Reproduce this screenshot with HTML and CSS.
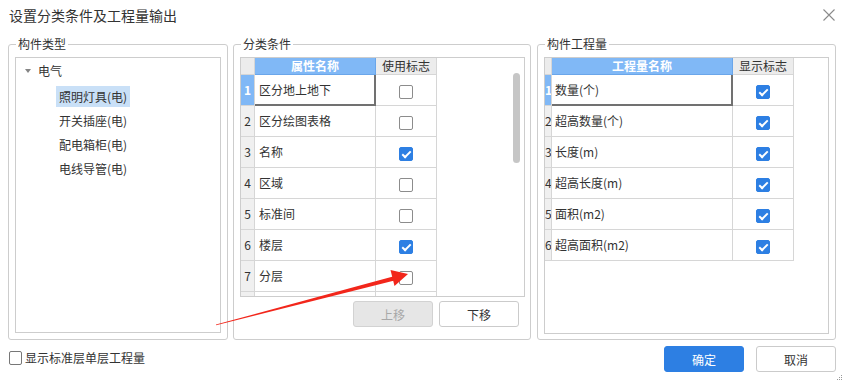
FILE: index.html
```html
<!DOCTYPE html>
<html lang="zh-CN">
    <head>
        <meta charset="UTF-8" />
        <title>设置分类条件及工程量输出</title>
        <link rel="stylesheet" href="styles.css">
    </head>
    <body>
        <div class="dialog">
            <div class="titlebar">
                <span class="title">设置分类条件及工程量输出</span>
                <svg class="close" width="12" height="12" viewBox="0 0 12 12">
                    <path d="M0.5 0.5 L11.5 11.5 M11.5 0.5 L0.5 11.5" stroke="#8a8a8a" stroke-width="1.1" fill="none" />
                </svg>
            </div>

            <div class="main">
                <fieldset class="group group-type">
                    <legend>构件类型</legend>
                    <div class="tree">
                        <div class="tree-node"><i class="caret"></i>电气</div>
                        <div class="tree-leaf"><span class="selected">照明灯具(电)</span></div>
                        <div class="tree-leaf"><span>开关插座(电)</span></div>
                        <div class="tree-leaf"><span>配电箱柜(电)</span></div>
                        <div class="tree-leaf"><span>电线导管(电)</span></div>
                    </div>
                </fieldset>

                <fieldset class="group group-cond">
                    <legend>分类条件</legend>
                    <div class="grid">
                        <table class="sheet sheet-cond">
                            <colgroup><col class="c-idx"><col class="c-name"><col class="c-flag"></colgroup>
                            <thead>
                                <tr><th class="idx"></th><th class="hl">属性名称</th><th>使用标志</th></tr>
                            </thead>
                            <tbody>
                                <tr><td class="idx cur">1</td><td class="name focus">区分地上地下</td><td class="flag"><span class="cb"></span></td></tr>
                                <tr><td class="idx">2</td><td class="name">区分绘图表格</td><td class="flag"><span class="cb"></span></td></tr>
                                <tr><td class="idx">3</td><td class="name">名称</td><td class="flag"><span class="cb on"></span></td></tr>
                                <tr><td class="idx">4</td><td class="name">区域</td><td class="flag"><span class="cb"></span></td></tr>
                                <tr><td class="idx">5</td><td class="name">标准间</td><td class="flag"><span class="cb"></span></td></tr>
                                <tr><td class="idx">6</td><td class="name">楼层</td><td class="flag"><span class="cb on"></span></td></tr>
                                <tr><td class="idx">7</td><td class="name">分层</td><td class="flag"><span class="cb"></span></td></tr>
                                <tr><td class="idx"></td><td class="name"></td><td class="flag"></td></tr>
                            </tbody>
                        </table>
                        <div class="scrollbar"></div>
                    </div>
                    <div class="move-btns">
                        <button class="btn" disabled>上移</button>
                        <button class="btn">下移</button>
                    </div>
                </fieldset>

                <fieldset class="group group-qty">
                    <legend>构件工程量</legend>
                    <div class="grid grid-tall">
                        <table class="sheet sheet-qty">
                            <colgroup><col class="c-idx"><col class="c-name"><col class="c-flag"></colgroup>
                            <thead>
                                <tr><th class="idx"></th><th class="hl">工程量名称</th><th>显示标志</th></tr>
                            </thead>
                            <tbody>
                                <tr><td class="idx cur">1</td><td class="name focus">数量(个)</td><td class="flag"><span class="cb on"></span></td></tr>
                                <tr><td class="idx">2</td><td class="name">超高数量(个)</td><td class="flag"><span class="cb on"></span></td></tr>
                                <tr><td class="idx">3</td><td class="name">长度(m)</td><td class="flag"><span class="cb on"></span></td></tr>
                                <tr><td class="idx">4</td><td class="name">超高长度(m)</td><td class="flag"><span class="cb on"></span></td></tr>
                                <tr><td class="idx">5</td><td class="name">面积(m2)</td><td class="flag"><span class="cb on"></span></td></tr>
                                <tr><td class="idx">6</td><td class="name">超高面积(m2)</td><td class="flag"><span class="cb on"></span></td></tr>
                            </tbody>
                        </table>
                    </div>
                </fieldset>
            </div>

            <div class="footer">
                <label class="std-check"><span class="cb"></span>显示标准层单层工程量</label>
                <div class="actions">
                    <button class="btn btn-primary">确定</button>
                    <button class="btn">取消</button>
                </div>
            </div>

            <svg class="grip" width="6" height="6" viewBox="0 0 6 6">
                <rect x="4" y="0" width="1" height="1" fill="#999" />
                <rect x="2" y="2" width="1" height="1" fill="#999" />
                <rect x="4" y="2" width="1" height="1" fill="#999" />
                <rect x="0" y="4" width="1" height="1" fill="#999" />
                <rect x="2" y="4" width="1" height="1" fill="#999" />
                <rect x="4" y="4" width="1" height="1" fill="#999" />
            </svg>

            <!-- red annotation arrow drawn over the dialog -->
            <svg class="arrow" width="843" height="381" viewBox="0 0 843 381">
                <polygon points="216,324.5 393,276.5 394.5,280.5 216,325.3" fill="#f2261b" />
                <polygon points="408,274 390.5,270 394.5,286" fill="#f2261b" />
            </svg>
        </div>
    </body>
</html>
```

FILE: styles.css
```css
body {
    margin: 0;
    background: #fff;
    font-family: "Noto Sans CJK SC", "Noto Sans", sans-serif;
    font-size: 12px;
    color: #333;
}

.dialog {
    position: relative;
    width: 843px;
    height: 381px;
    overflow: hidden;
    background: #fff;
}

.titlebar {
    height: 30px;
    display: flex;
    align-items: center;
    justify-content: space-between;
    padding: 0 8px 0 9px;
}

.title {
    font-size: 14px;
    color: #333;
}

.close {
    display: block;
    margin-top: -1px;
}

.main {
    display: flex;
    margin-top: 7px;
    padding-left: 8px;
}

.group {
    margin: 0;
    padding: 0 6px 6px;
    border: 1px solid #cdcdcd;
    border-radius: 3px;
    box-sizing: border-box;
    height: 303px;
    min-width: 0;
}

.group legend {
    padding: 0 2px;
    margin-left: 1px;
    font-size: 12px;
    line-height: 14px;
    color: #333;
}

.group-type {
    width: 220px;
}

.group-cond {
    width: 298px;
    margin-left: 5px;
}

.group-qty {
    width: 299px;
    margin-left: 6px;
}

/* tree list */
.tree {
    margin-top: 6px;
    width: 206px;
    height: 276px;
    box-sizing: border-box;
    border: 1px solid #cdcdcd;
    padding-top: 1px;
}

.tree-node,
.tree-leaf {
    height: 24px;
    line-height: 24px;
    white-space: nowrap;
}

.tree-node {
    padding-left: 9px;
    display: flex;
    align-items: center;
}

.caret {
    width: 0;
    height: 0;
    border-left: 3.5px solid transparent;
    border-right: 3.5px solid transparent;
    border-top: 4px solid #858585;
    margin-right: 7px;
    margin-top: -1px;
}

.tree-leaf {
    padding-left: 40px;
}

.tree-leaf span {
    display: inline-block;
    line-height: 21px;
    padding: 0 3px;
    vertical-align: middle;
}

.tree-leaf .selected {
    background: #c9e0f7;
}

/* grids */
.grid {
    position: relative;
    margin-top: 6px;
    width: 285px;
    height: 240px;
    box-sizing: border-box;
    border: 1px solid #cdcdcd;
    overflow: hidden;
}

.grid-tall {
    height: 277px;
}

.sheet {
    table-layout: fixed;
    border-collapse: separate;
    border-spacing: 0;
}

.sheet-cond {
    width: 196px;
}

.sheet-cond .c-idx { width: 14px; }
.sheet-cond .c-name { width: 121px; }
.sheet-cond .c-flag { width: 61px; }

.sheet-qty {
    width: 249px;
}

.sheet-qty .c-idx { width: 7px; }
.sheet-qty .c-name { width: 181px; }
.sheet-qty .c-flag { width: 61px; }

.sheet th,
.sheet td {
    padding: 0;
    border-right: 1px solid #d6d6d6;
    border-bottom: 1px solid #d6d6d6;
    overflow: hidden;
    white-space: nowrap;
}

.sheet th {
    height: 16px;
    line-height: 16px;
    font-weight: normal;
    background: #ececec;
    color: #333;
    text-align: center;
}

.sheet th.hl {
    background: #80b8f6;
    color: #fff;
    font-weight: bold;
    border-right-color: #6aa6ea;
    border-bottom-color: #6aa6ea;
}

.sheet td {
    height: 30px;
    line-height: 30px;
}

.sheet td.idx {
    background: #f0f0f0;
    text-align: center;
    font-size: 12px;
}

.sheet td.cur {
    background: #80b8f6;
    color: #fff;
    font-weight: bold;
}

.sheet td.name {
    padding-left: 4px;
}

.sheet-qty td.name {
    padding-left: 3px;
}

.sheet td.focus {
    border-right-color: #717171;
    border-bottom-color: #717171;
    box-shadow: inset -1px -1px 0 #717171;
}

.sheet td.flag {
    text-align: center;
}

.cb {
    position: relative;
    display: inline-block;
    width: 14px;
    height: 14px;
    box-sizing: border-box;
    border: 1px solid #8c8c8c;
    border-radius: 2px;
    background: #fff;
    vertical-align: middle;
}

.cb.on {
    background: #2d7fe3;
    border-color: #2d7fe3;
}

.cb.on::after {
    content: "";
    position: absolute;
    left: 4px;
    top: 1px;
    width: 3px;
    height: 7px;
    border: solid #fff;
    border-width: 0 2px 2px 0;
    transform: rotate(45deg);
}

.scrollbar {
    position: absolute;
    left: 272px;
    top: 15px;
    width: 7px;
    height: 90px;
    border-radius: 4px;
    background: #c6c6c6;
}

/* buttons */
.move-btns {
    display: flex;
    justify-content: flex-end;
    gap: 6px;
    margin-top: 4px;
    width: 279px;
}

.btn {
    width: 80px;
    height: 26px;
    padding: 0;
    border: 1px solid #cbcbcb;
    border-radius: 3px;
    background: #fff;
    color: #333;
    font-family: inherit;
    font-size: 12px;
    cursor: pointer;
}

.btn:disabled {
    background: #e6e6e6;
    border-color: #d2d2d2;
    color: #a8a8a8;
    cursor: default;
}

.btn-primary {
    background: #2d7fe3;
    border-color: #2d7fe3;
    color: #fff;
}

.footer {
    display: flex;
    align-items: center;
    justify-content: space-between;
    padding: 6px 7px 0 9px;
}

.std-check {
    display: flex;
    align-items: center;
    gap: 3px;
    margin-top: -3px;
}

.std-check .cb {
    width: 13px;
    border-color: #777;
}

.actions {
    display: flex;
    gap: 12px;
}

.grip {
    position: absolute;
    right: 0;
    bottom: 0;
}

.arrow {
    position: absolute;
    left: 0;
    top: 0;
    pointer-events: none;
}
```
